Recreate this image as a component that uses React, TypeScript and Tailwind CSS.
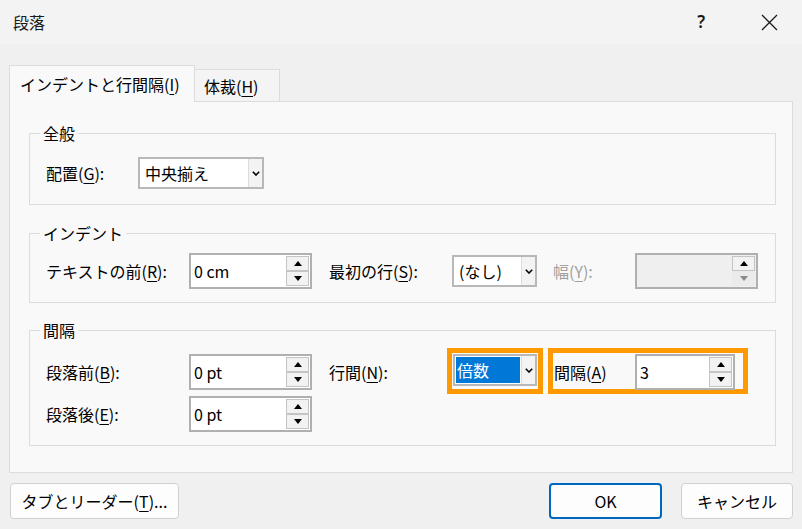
import React from "react"

const font = { fontFamily: '"Noto Sans CJK JP", "Noto Sans", sans-serif' }

function U({ children }: { children: React.ReactNode }) {
  return <span className="underline underline-offset-[3px] decoration-[1px]">{children}</span>
}

function Arrow({ up, color = "#000" }: { up?: boolean; color?: string }) {
  return (
    <svg width="8" height="5" viewBox="0 0 8 5">
      {up ? <path d="M0 5 L4 0 L8 5 Z" fill={color} /> : <path d="M0 0 L4 5 L8 0 Z" fill={color} />}
    </svg>
  )
}

function Spinner({ disabled }: { disabled?: boolean }) {
  return (
    <div className="flex flex-col w-[23px] h-full py-[1px] mr-[1px]">
      <div className="flex-1 flex items-center justify-center border border-[#c4c4c4] bg-[#f2f2f2]">
        <Arrow up />
      </div>
      <div
        className={`flex-1 flex items-center justify-center border ${
          disabled ? "border-transparent bg-[#ebebeb]" : "border-[#c4c4c4] bg-[#f2f2f2]"
        }`}
      >
        <Arrow color={disabled ? "#8a8a8a" : "#000"} />
      </div>
    </div>
  )
}

function SpinBox({ value, width, disabled }: { value?: string; width: string; disabled?: boolean }) {
  return (
    <div
      className={`${width} h-[36px] flex items-stretch border-2 border-[#b0b0b0] ${
        disabled ? "bg-[#efefef]" : "bg-white"
      }`}
    >
      <div className="flex-1 flex items-center pl-[3px] text-[16px] text-black">{value}</div>
      <Spinner disabled={disabled} />
    </div>
  )
}

function Chevron() {
  return (
    <svg width="8" height="5" viewBox="0 0 8 5">
      <path d="M0.8 0.8 L4 4 L7.2 0.8" stroke="#000" strokeWidth="1.6" fill="none" />
    </svg>
  )
}

function Combo({ value, width, selected }: { value: string; width: string; selected?: boolean }) {
  return (
    <div className={`${width} h-[32px] flex items-stretch border-2 border-[#b8b8b8] bg-white`}>
      <div className="flex-1 flex items-center p-[1px]">
        {selected ? (
          <span className="h-full w-full flex items-center bg-[#0078d7] text-white pl-[1px] text-[16px]">{value}</span>
        ) : (
          <span className="pl-[4px] text-[16px] text-black">{value}</span>
        )}
      </div>
      <div className="w-[14px] flex items-center justify-center border-l border-[#dcdcdc] bg-[#f3f3f3]">
        <Chevron />
      </div>
    </div>
  )
}

function Group({ title, children, className }: { title: string; children: React.ReactNode; className?: string }) {
  return (
    <fieldset className={`border border-[#dcdcdc] mx-0 pb-[13px] ${className ?? ""}`}>
      <legend className="ml-[10px] px-[3px] text-[16px] leading-[22px] text-black">{title}</legend>
      {children}
    </fieldset>
  )
}

function Label({ children, width, gray }: { children: React.ReactNode; width: string; gray?: boolean }) {
  return (
    <div className={`${width} h-[36px] flex items-center text-[16px] ${gray ? "text-[#a0a0a0]" : "text-black"}`}>
      {children}
    </div>
  )
}

export default function App() {
  return (
    <div className="w-[802px] h-[529px] bg-[#f0f0f0] flex flex-col overflow-hidden" style={font}>
      {/* title bar */}
      <div className="h-[44px] bg-[#f3f3f3] flex items-center pl-[13px] shrink-0">
        <span className="text-[16px] text-[#1a1a1a]">段落</span>
        <span className="ml-auto text-[17px] font-semibold text-[#1a1a1a] mr-[56px]" style={{ fontFamily: '"Noto Sans", sans-serif' }}>?</span>
        <svg width="17" height="17" viewBox="0 0 17 17" className="mr-[24px]">
          <path d="M1 1 L16 16 M16 1 L1 16" stroke="#1a1a1a" strokeWidth="1.3" />
        </svg>
      </div>

      {/* tabs */}
      <div className="flex items-end pl-[9px] pt-[21px] h-[57px] shrink-0">
        <div className="relative z-10 w-[186px] h-[37px] -mb-[1px] bg-[#f9f9f9] border border-b-0 border-[#dcdcdc] flex items-center pl-[10px] text-[16px] text-black">
          インデントと行間隔(<U>I</U>)
        </div>
        <div className="w-[85px] h-[32px] bg-[#f4f4f4] border border-l-0 border-b-0 border-[#dcdcdc] flex items-center pl-[9px] text-[16px] text-black">
          体裁(<U>H</U>)
        </div>
      </div>

      {/* panel */}
      <div className="ml-[9px] w-[784px] h-[372px] bg-[#f9f9f9] border border-[#dcdcdc] pt-[20px] pl-[19px] shrink-0">
        <div className="w-[747px] flex flex-col">
          <Group title="全般">
            <div className="flex items-center pl-[16px] pt-[11px]">
              <Label width="w-[92px]">配置(<U>G</U>):</Label>
              <Combo value="中央揃え" width="w-[126px]" />
            </div>
          </Group>

          <Group title="インデント" className="mt-[17px]">
            <div className="flex items-center pl-[16px] pt-[9px]">
              <Label width="w-[143px]">テキストの前(<U>R</U>):</Label>
              <SpinBox value="0 cm" width="w-[123px]" />
              <div className="ml-[17px]">
                <Label width="w-[123px]">最初の行(<U>S</U>):</Label>
              </div>
              <Combo value="(なし)" width="w-[85px]" />
              <div className="ml-[16px]">
                <Label width="w-[82px]" gray>幅(<U>Y</U>):</Label>
              </div>
              <SpinBox width="w-[123px]" disabled />
            </div>
          </Group>

          <Group title="間隔" className="mt-[16px]">
            <div className="flex flex-col gap-[6px] pl-[16px] pt-[13px]">
              <div className="flex items-start h-[36px]">
                <Label width="w-[143px]">段落前(<U>B</U>):</Label>
                <SpinBox value="0 pt" width="w-[123px]" />
                <div className="ml-[17px]">
                  <Label width="w-[118px]">行間(<U>N</U>):</Label>
                </div>
                <div className="w-[96px] h-[46px] -mt-[6px] border-[5px] border-[#ff9900] px-[1px] pt-[1px]">
                  <Combo value="倍数" width="w-[84px]" selected />
                </div>
                <div className="ml-[5px] w-[200px] h-[46px] -mt-[6px] border-[5px] border-[#ff9900] flex items-center pl-[1px] pt-[1px]">
                  <div className="w-[81px] text-[16px] text-black">間隔(<U>A</U>)</div>
                  <SpinBox value="3" width="w-[100px]" />
                </div>
              </div>
              <div className="flex items-start h-[36px]">
                <Label width="w-[143px]">段落後(<U>E</U>):</Label>
                <SpinBox value="0 pt" width="w-[123px]" />
              </div>
            </div>
          </Group>
        </div>
      </div>

      {/* buttons */}
      <div className="flex items-start pt-[10px] pl-[10px] pr-[9px]">
        <button className="w-[169px] h-[36px] bg-[#fdfdfd] border border-[#d0d0d0] rounded-[4px] text-[16px] text-black">
          タブとリーダー(<U>T</U>)...
        </button>
        <button className="ml-auto w-[113px] h-[36px] bg-[#fdfdfd] border-2 border-[#0067c0] rounded-[4px] text-[16px] text-black">
          OK
        </button>
        <button className="ml-[19px] w-[112px] h-[36px] bg-[#fdfdfd] border border-[#d0d0d0] rounded-[4px] text-[16px] text-black">
          キャンセル
        </button>
      </div>
    </div>
  )
}
